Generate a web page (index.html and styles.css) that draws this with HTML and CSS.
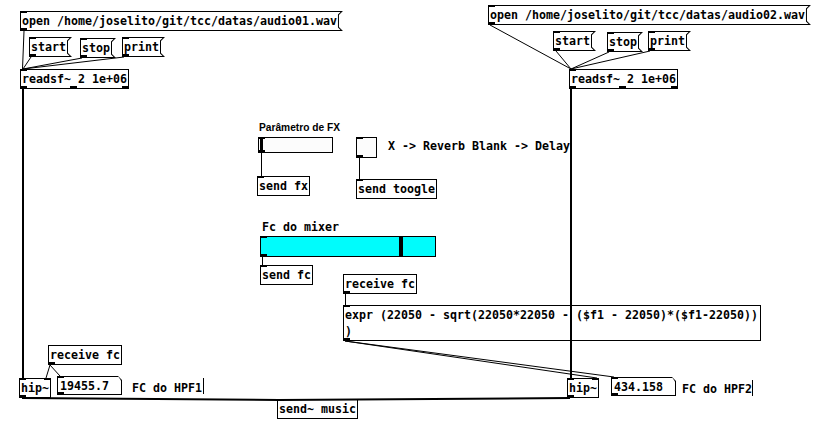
FILE: index.html
```html
<!DOCTYPE html>
<html lang="en">

<head>
    <meta charset="UTF-8">
    <title>tcc patch</title>
    <link rel="stylesheet" href="styles.css">
</head>

<body>
    <div class="patch">
        <!-- left player -->
        <div class="box msg open1">open /home/joselito/git/tcc/datas/audio01.wav<span class="io in"></span><span class="io out"></span></div>
        <div class="box msg start1">start<span class="io in"></span><span class="io out"></span></div>
        <div class="box msg stop1">stop<span class="io in"></span><span class="io out"></span></div>
        <div class="box msg print1">print<span class="io in"></span><span class="io out"></span></div>
        <div class="box obj readsf1">readsf~ 2 1e+06<span class="io in"></span><span class="io out"></span><span class="io out mid"></span><span class="io out right"></span></div>

        <!-- right player -->
        <div class="box msg open2">open /home/joselito/git/tcc/datas/audio02.wav<span class="io in"></span><span class="io out"></span></div>
        <div class="box msg start2">start<span class="io in"></span><span class="io out"></span></div>
        <div class="box msg stop2">stop<span class="io in"></span><span class="io out"></span></div>
        <div class="box msg print2">print<span class="io in"></span><span class="io out"></span></div>
        <div class="box obj readsf2">readsf~ 2 1e+06<span class="io in"></span><span class="io out"></span><span class="io out mid"></span><span class="io out right"></span></div>

        <!-- fx controls -->
        <div class="label small fx-label">Parâmetro de FX</div>
        <div class="gui hsl-fx"><span class="knob"></span><span class="io in"></span><span class="io out"></span></div>
        <div class="gui tgl"><span class="io in"></span><span class="io out"></span></div>
        <div class="label fx-comment">X -&gt; Reverb Blank -&gt; Delay</div>
        <div class="box obj send-fx">send fx<span class="io in"></span></div>
        <div class="box obj send-toogle">send toogle<span class="io in"></span></div>

        <div class="label mixer-label">Fc do mixer</div>
        <div class="gui hsl-fc"><span class="knob wide"></span><span class="io in"></span><span class="io out"></span></div>
        <div class="box obj send-fc">send fc<span class="io in"></span></div>

        <div class="box obj recv2">receive fc<span class="io out"></span></div>
        <div class="box obj expr">expr (22050 - sqrt(22050*22050 - ($f1 - 22050)*($f1-22050))
)<span class="io in"></span><span class="io out"></span></div>

        <!-- filters -->
        <div class="box obj recv1">receive fc<span class="io out"></span></div>
        <div class="box obj hip1">hip~<span class="io in"></span><span class="io in right"></span><span class="io out"></span></div>
        <div class="box num num1">19455.7<span class="io in"></span><span class="io out"></span></div>
        <div class="label hpf1">FC do HPF1</div>
        <span class="cursor cursor1"></span>

        <div class="box obj hip2">hip~<span class="io in"></span><span class="io in right"></span><span class="io out"></span></div>
        <div class="box num num2">434.158<span class="io in"></span><span class="io out"></span></div>
        <div class="label hpf2">FC do HPF2</div>
        <span class="cursor cursor2"></span>

        <div class="box obj send-music">send~ music<span class="io in"></span></div>

        <svg class="cords" width="823" height="428" viewBox="0 0 823 428">
            <g class="ctl">
                <line x1="24" y1="31" x2="22.5" y2="69" />
                <line x1="31" y1="57" x2="23" y2="69" />
                <line x1="82" y1="58" x2="23" y2="69" />
                <line x1="124" y1="57" x2="23" y2="69" />

                <line x1="490" y1="25" x2="571" y2="69" />
                <line x1="556" y1="51" x2="571" y2="69" />
                <line x1="609" y1="52" x2="571" y2="69" />
                <line x1="650" y1="51" x2="571" y2="69" />

                <line x1="261.5" y1="153" x2="261.5" y2="176" />
                <line x1="359.5" y1="158" x2="359.5" y2="179" />
                <line x1="262.5" y1="257" x2="262.5" y2="265" />
                <line x1="345.5" y1="294" x2="345.5" y2="305" />

                <line x1="345" y1="341" x2="597" y2="378" />
                <line x1="345" y1="341" x2="614" y2="377" />

                <line x1="50" y1="365" x2="46" y2="378" />
                <line x1="50" y1="365" x2="60" y2="376" />
            </g>
            <g class="sig">
                <line x1="23" y1="89" x2="23" y2="378" />
                <line x1="571" y1="89" x2="571" y2="378" />
                <line x1="22" y1="398" x2="279" y2="400" />
                <line x1="570" y1="398" x2="279" y2="400" />
            </g>
        </svg>
    </div>
</body>

</html>
```

FILE: styles.css
```css
* {
    margin: 0;
    padding: 0;
    box-sizing: border-box;
}

body {
    background: #fff;
    color: #000;
    font-family: "DejaVu Sans Mono", "Liberation Mono", monospace;
    font-weight: bold;
    font-size: 11.63px;
}

.patch {
    position: relative;
    width: 823px;
    height: 428px;
    overflow: hidden;
    background: #fff;
}

/* object boxes */

.box {
    position: absolute;
    height: 20px;
    padding: 1px;
    border: 1px solid #000;
    line-height: 16px;
    white-space: pre;
}

.io {
    position: absolute;
    left: -1px;
    width: 7px;
    background: #000;
}

.io.in {
    top: -1px;
    height: 2px;
}

.io.out {
    bottom: -1px;
    height: 3px;
}

.io.right {
    left: auto;
    right: -1px;
}

.io.mid {
    left: calc(50% - 4px);
}

/* message boxes: flag on the right */

.msg {
    border: none;
    padding: 2px 6px 2px 2px;
    background: #000;
    clip-path: polygon(0 0, 100% 0, calc(100% - 4px) 4px, calc(100% - 4px) calc(100% - 4px), 100% 100%, 0 100%);
}

.msg::before {
    content: '';
    position: absolute;
    inset: 1px;
    background: #fff;
    z-index: -1;
    clip-path: polygon(0 0, calc(100% - 1.41px) 0, calc(100% - 4px) 2.59px, calc(100% - 4px) calc(100% - 2.59px), calc(100% - 1.41px) 100%, 0 100%);
}

/* number boxes: cut corner */

.num {
    border: none;
    width: 65px;
    height: 19px;
    padding: 2px 2px 1px 3px;
    background: #000;
    clip-path: polygon(0 0, calc(100% - 4px) 0, 100% 4px, 100% 100%, 0 100%);
}

.num::before {
    content: '';
    position: absolute;
    inset: 1px;
    background: #fff;
    z-index: -1;
    clip-path: polygon(0 0, calc(100% - 2.41px) 0, 100% 3.41px, 100% 100%, 0 100%);
}

.msg .io,
.num .io {
    left: 0;
}

.msg .io.in,
.num .io.in {
    top: 0;
}

.msg .io.out,
.num .io.out {
    bottom: 0;
}

/* gui objects */

.gui {
    position: absolute;
    border: 1px solid #000;
    background: #fcfcfc;
}

.knob {
    position: absolute;
    top: 0;
    bottom: 0;
    left: 1px;
    width: 3px;
    background: #000;
}

.knob.wide {
    left: 138px;
    width: 4px;
}

.hsl-fx {
    left: 258px;
    top: 137px;
    width: 75px;
    height: 16px;
}

.tgl {
    left: 356px;
    top: 137px;
    width: 21px;
    height: 21px;
}

.hsl-fc {
    left: 260px;
    top: 236px;
    width: 176px;
    height: 21px;
    background: #00fcfc;
}

/* labels and comments */

.label {
    position: absolute;
    line-height: 16px;
    white-space: pre;
}

.label.small {
    font-family: "Liberation Sans", Arial, sans-serif;
    font-size: 10.2px;
    line-height: 12px;
}

.cursor {
    position: absolute;
    width: 1px;
    background: #000;
}

/* positions on the canvas */

.open1 { left: 20px; top: 11px; }
.start1 { left: 29px; top: 37px; }
.stop1 { left: 80px; top: 38px; }
.print1 { left: 122px; top: 37px; }
.readsf1 { left: 20px; top: 69px; }

.open2 { left: 488px; top: 5px; }
.start2 { left: 553px; top: 31px; }
.stop2 { left: 607px; top: 32px; }
.print2 { left: 648px; top: 31px; }
.readsf2 { left: 569px; top: 69px; }

.fx-label { left: 259px; top: 122px; }
.fx-comment { left: 388px; top: 138px; }
.send-fx { left: 257px; top: 176px; }
.send-toogle { left: 356px; top: 179px; }

.mixer-label { left: 262px; top: 219px; }
.send-fc { left: 260px; top: 265px; }
.recv2 { left: 343px; top: 274px; }

.expr {
    left: 343px;
    top: 305px;
    width: 418px;
    height: 36px;
}

.recv1 { left: 48px; top: 345px; }
.hip1 { left: 19px; top: 378px; }
.num1 { left: 57px; top: 376px; }
.hpf1 { left: 132px; top: 380px; }
.cursor1 { left: 203px; top: 378px; height: 16px; }

.hip2 { left: 567px; top: 378px; }
.num2 { left: 611px; top: 377px; }
.hpf2 { left: 682px; top: 381px; }
.cursor2 { left: 752px; top: 380px; height: 16px; }

.send-music { left: 277px; top: 399px; }

/* cords */

.cords {
    position: absolute;
    top: 0;
    left: 0;
    pointer-events: none;
}

.cords line {
    stroke: #000;
}

.cords .ctl line {
    stroke-width: 1;
}

.cords .sig line {
    stroke-width: 2;
}
```
